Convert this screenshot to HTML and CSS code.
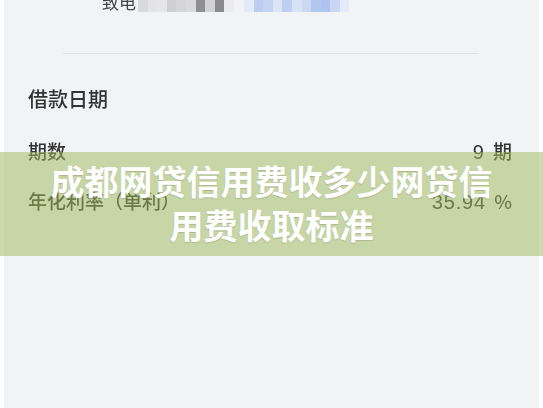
FILE: index.html
```html
<!doctype html>
<html lang="zh-CN">
    <head>
        <meta charset="utf-8" />
        <title>成都网贷信用费收多少网贷信用费收取标准</title>
        <link rel="stylesheet" href="styles.css">
    </head>

    <body>
        <div class="page">
            <div class="sheet">
                <div class="contact">
                    <span class="contact-label">致电</span>
                    <span class="mosaic">
                        <i class="g1"></i><i class="g2"></i><i class="g3"></i><i class="g4"></i><i class="g5"></i>
                        <i class="g6"></i><i class="g7"></i><i class="g8"></i><i class="g9"></i><i class="g10"></i>
                    </span>
                    <span class="mosaic mosaic-blue">
                        <i class="b1"></i><i class="b2"></i><i class="b3"></i><i class="b4"></i><i class="b5"></i>
                        <i class="b6"></i><i class="b7"></i><i class="b8"></i><i class="b9"></i><i class="b10"></i><i class="b11"></i>
                    </span>
                </div>

                <hr class="divider" />

                <h2 class="section-title">借款日期</h2>

                <div class="row">
                    <span>期数</span>
                    <span class="value"><span class="num">9</span> 期</span>
                </div>
                <div class="row">
                    <span>年化利率（单利）</span>
                    <span class="value"><span class="num">35.94</span> %</span>
                </div>
            </div>

            <div class="banner">
                <h1>成都网贷信用费收多少网贷信<br />用费收取标准</h1>
            </div>
        </div>
    </body>
</html>
```

FILE: styles.css
```css
html, body {
    margin: 0;
    padding: 0;
    background-color: #ffffff;
}
body {
    font-family: "Noto Sans CJK SC", "Noto Sans", sans-serif;
    color: #333333;
}
.page {
    position: relative;
    width: 543px;
    height: 408px;
    overflow: hidden;
}
.sheet {
    margin: 0 4px;
    height: 408px;
    background-color: #f2f3f5;
    overflow: hidden;
    filter: blur(0.6px);
}

/* phone number line, masked */
.contact {
    display: flex;
    align-items: flex-start;
    margin-top: -8px;
    padding-left: 98px;
    height: 20px;
}
.contact-label {
    font-size: 17px;
    line-height: 20px;
    color: #444444;
}
.mosaic {
    display: flex;
    margin-left: 2px;
    height: 20px;
}
.mosaic i {
    display: block;
    width: 9.6px;
    height: 20px;
}
.mosaic-blue {
    margin-left: 10px;
}
.g1 { background: #d9d9db; }
.g2 { background: #e4e4e6; }
.g3 { background: #e6e6e8; }
.g4 { background: #cfcfd1; }
.g5 { background: #d6d6d8; }
.g6 { background: #dadadc; }
.g7 { background: #8f8f91; }
.g8 { background: #d2d2d4; }
.g9 { background: #8b8b8d; }
.g10 { background: #ececee; }
.b1 { background: #e3eaf8; }
.b2 { background: #bccdf0; }
.b3 { background: #c4d3f2; }
.b4 { background: #dbe4f6; }
.b5 { background: #bfcff1; }
.b6 { background: #d8e2f6; }
.b7 { background: #cbd8f3; }
.b8 { background: #b2c6ee; }
.b9 { background: #aec3ee; }
.b10 { background: #c9d7f4; }
.b11 { background: #e4eaf8; }

.divider {
    margin: 41px 0 0 59px;
    width: 416px;
    height: 1px;
    border: 0;
    background-color: #e2e3e6;
}
.section-title {
    margin: 32px 0 0 24px;
    font-size: 20px;
    line-height: 26px;
    font-weight: 500;
    color: #333333;
}
.row {
    display: flex;
    justify-content: space-between;
    margin: 0 27px 0 24px;
    font-size: 19px;
    line-height: 24px;
    font-weight: 500;
}
.section-title + .row {
    margin-top: 27px;
}
.row + .row {
    margin-top: 25px;
}
.value {
    word-spacing: 4px;
}
.num {
    font-family: "Liberation Sans", Arial, sans-serif;
    font-size: 20px;
    letter-spacing: 0.8px;
}

/* headline band laid over the screen */
.banner {
    position: absolute;
    left: 0;
    right: 0;
    top: 152px;
    height: 104px;
    box-sizing: border-box;
    padding-top: 7px;
    background-color: rgba(162, 188, 96, 0.52);
}
.banner h1 {
    margin: 0;
    text-align: center;
    font-size: 34px;
    line-height: 44px;
    font-weight: 700;
    color: #ffffff;
    text-shadow: 0 1px 1px rgba(60, 70, 40, 0.2);
}
```
